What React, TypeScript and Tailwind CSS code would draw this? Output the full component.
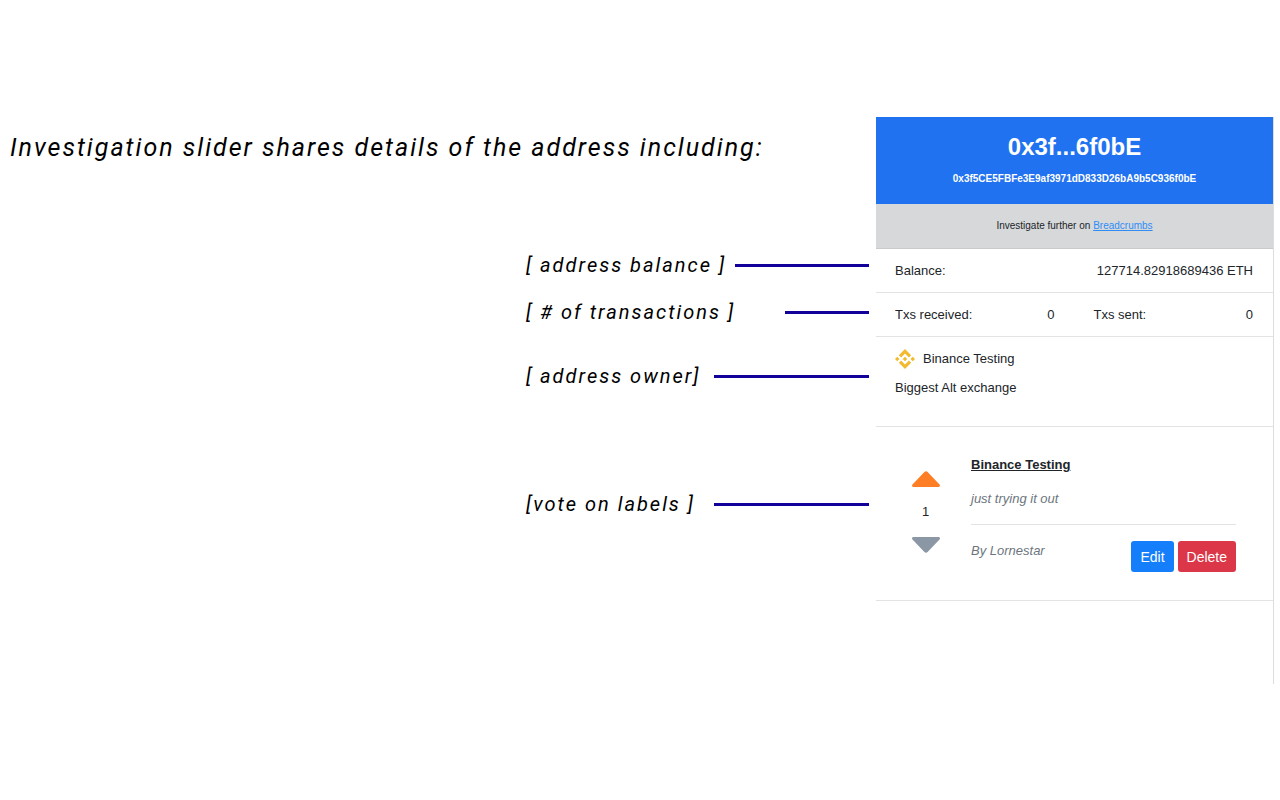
type Note = { text: string; row: string; line: string };

const notes: Note[] = [
  { text: "[ address balance ]", row: "", line: "w-[134px]" },
  { text: "[ # of transactions ]", row: "mt-[15px]", line: "w-[84px]" },
  { text: "[ address owner]", row: "mt-8", line: "w-[155px]" },
  { text: "[vote on labels ]", row: "mt-24", line: "w-[155px]" },
];

function BinanceLogo() {
  return (
    <svg viewBox="0 0 126.61 126.61" className="size-5 shrink-0" fill="#f3ba2f" aria-hidden="true">
      <path d="M38.73 53.2 63.31 28.63 87.9 53.22 102.2 38.92 63.31 0 24.43 38.9z" />
      <path d="M0 63.31 14.3 49.01 28.6 63.31 14.3 77.61z" />
      <path d="M38.73 73.41 63.31 98 87.9 73.4 102.21 87.69 63.31 126.61 24.43 87.73z" />
      <path d="M98 63.31 112.3 49.01 126.61 63.31 112.3 77.61z" />
      <path d="M77.83 63.3 63.31 48.78 48.77 63.33 63.31 77.83z" />
    </svg>
  );
}

function Caret({ className }: { className: string }) {
  return (
    <svg viewBox="0 0 28 16" className={className} fill="currentColor" aria-hidden="true">
      <path d="M1.6 16h24.8c1.5 0 2.1-1.6 1.1-2.6L15.6 1c-.9-1-2.3-1-3.2 0L.5 13.4c-1 1-.4 2.6 1.1 2.6z" />
    </svg>
  );
}

function Annotations() {
  return (
    <section className="min-w-0 flex-1 pt-[13px] pr-[7px] pl-[10px] font-['Roboto',sans-serif] text-black italic">
      <h1 className="text-[25px] leading-9 tracking-[2px] whitespace-nowrap">
        Investigation slider shares details of the address including:
      </h1>
      <ul className="mt-[83px] ml-auto w-[343px]">
        {notes.map((note) => (
          <li key={note.text} className={`flex h-8 items-center justify-between whitespace-nowrap ${note.row}`}>
            <span className="text-[20px] leading-8 tracking-[2px]">{note.text}</span>
            <span className={`h-[3px] shrink-0 bg-[#12009a] ${note.line}`} />
          </li>
        ))}
      </ul>
    </section>
  );
}

function AddressPanel() {
  return (
    <aside className="w-[398px] shrink-0 border-r border-[#dcdde0] pb-[83px] text-[13px] leading-5 text-[#212529]">
      <header className="bg-[#2072f0] pt-3 pb-[15px] text-center text-white">
        <h2 className="text-[24px] leading-9 font-bold">0x3f...6f0bE</h2>
        <p className="mt-1 text-[10px] leading-5 font-bold">0x3f5CE5FBFe3E9af3971dD833D26bA9b5C936f0bE</p>
      </header>
      <p className="border-b border-[#c9cacc] bg-[#d6d8da] py-3 text-center text-[10px] leading-5">
        Investigate further on{" "}
        <a href="#breadcrumbs" className="text-[#2f8df5] underline">Breadcrumbs</a>
      </p>
      <dl>
        <div className="flex justify-between border-b border-[#e2e3e5] pt-3 pr-5 pb-[11px] pl-[19px]">
          <dt>Balance:</dt>
          <dd>127714.82918689436 ETH</dd>
        </div>
        <div className="grid grid-cols-2 border-b border-[#e2e3e5] pt-3 pb-[11px]">
          <div className="flex justify-between pr-5 pl-[19px]">
            <dt>Txs received:</dt>
            <dd>0</dd>
          </div>
          <div className="flex justify-between pr-5 pl-[19px]">
            <dt>Txs sent:</dt>
            <dd>0</dd>
          </div>
        </div>
      </dl>
      <section className="border-b border-[#e2e3e5] px-[19px] pt-3 pb-7">
        <div className="flex items-center gap-2">
          <BinanceLogo />
          <span>Binance Testing</span>
        </div>
        <p className="mt-[9px]">Biggest Alt exchange</p>
      </section>
      <article className="flex border-b border-[#e2e3e5] pt-7 pr-[37px] pb-7">
        <div className="flex w-[95px] shrink-0 flex-col items-center gap-[15px] pt-4 pl-1">
          <button aria-label="Upvote">
            <Caret className="block h-4 w-7 text-[#fd7e24]" />
          </button>
          <span>1</span>
          <button aria-label="Downvote">
            <Caret className="block h-4 w-7 rotate-180 text-[#8b97a4]" />
          </button>
        </div>
        <div className="min-w-0 flex-1">
          <h3 className="font-bold underline">Binance Testing</h3>
          <p className="mt-[14px] text-[#6c757d] italic">just trying it out</p>
          <div className="mt-[15px] flex items-start justify-between border-t border-[#e2e3e5] pt-4">
            <p className="text-[#6c757d] italic">By Lornestar</p>
            <div className="flex gap-1 text-[14px] text-white">
              <button className="h-[31px] rounded-[3px] bg-[#147efb] px-[9px]">Edit</button>
              <button className="h-[31px] rounded-[3px] bg-[#dc3748] px-[9px]">Delete</button>
            </div>
          </div>
        </div>
      </article>
    </aside>
  );
}

export default function App() {
  return (
    <main className="flex min-h-screen items-start bg-white pt-[117px] pr-[6px] font-['Liberation_Sans',Arial,sans-serif]">
      <Annotations />
      <AddressPanel />
    </main>
  );
}
